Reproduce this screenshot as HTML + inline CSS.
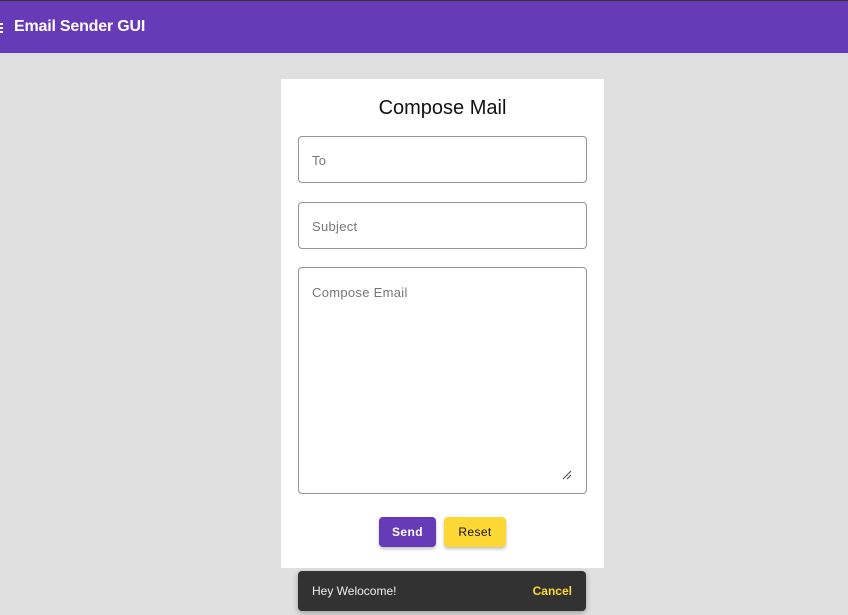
<!DOCTYPE html>
<html><head><style>
body{margin:0;width:848px;height:615px;background:#e0e0e0;font-family:"Liberation Sans",sans-serif;position:relative;overflow:hidden}
.bar{position:absolute;left:0;top:0;width:848px;height:53px;background:#673ab7;border-top:1px solid #333;box-sizing:border-box}
.bar .t{position:absolute;left:14px;top:17px;color:#fff;font-size:16px;font-weight:bold;letter-spacing:-.2px}
.bar .m{position:absolute;left:0;top:22px;width:3px;height:10px;background:repeating-linear-gradient(#fff 0 2px,transparent 2px 4px)}
.card{position:absolute;left:281px;top:79px;width:323px;height:489px;background:#fff}
h1{position:absolute;left:0;width:323px;top:97px;margin:0;text-align:center;font-weight:normal;font-size:20px;color:#111}
.f{position:absolute;left:298px;width:287px;border:1px solid #949494;border-radius:4px;background:#fff}
.f span{position:absolute;left:13px;color:#777;font-size:13px;letter-spacing:.3px}
.btn{position:absolute;top:517px;height:30px;border-radius:4px;font-size:12px;font-weight:bold;text-align:center;line-height:30px;box-shadow:0 2px 3px rgba(0,0,0,.25);letter-spacing:.4px}
.snack{position:absolute;left:298px;top:571px;width:288px;height:40px;background:#323232;border-radius:4px;box-shadow:0 2px 6px rgba(0,0,0,.3)}
</style></head><body>
<div class="bar"><div class="m"></div><div class="t">Email Sender GUI</div></div>
<div class="card"></div>
<h1 style="left:281px">Compose Mail</h1>
<div class="f" style="top:136px;height:45px"><span style="top:16px">To</span></div>
<div class="f" style="top:202px;height:45px"><span style="top:16px">Subject</span></div>
<div class="f" style="top:267px;height:225px"><span style="top:17px">Compose Email</span>
<svg style="position:absolute;right:14px;bottom:13px" width="10" height="10"><path d="M1 9L9 1M5 9L9 5" stroke="#555" stroke-width="1.2"/></svg></div>
<div class="btn" style="left:379px;width:57px;background:#673ab7;color:#fff">Send</div>
<div class="btn" style="left:444px;width:62px;background:#fdd835;color:#111;font-weight:normal">Reset</div>
<div class="snack"><span style="position:absolute;left:14px;top:13px;color:#eee;font-size:12px">Hey Welocome!</span><span style="position:absolute;right:14px;top:13px;color:#fdd835;font-size:12px;font-weight:bold">Cancel</span></div>
</body></html>
